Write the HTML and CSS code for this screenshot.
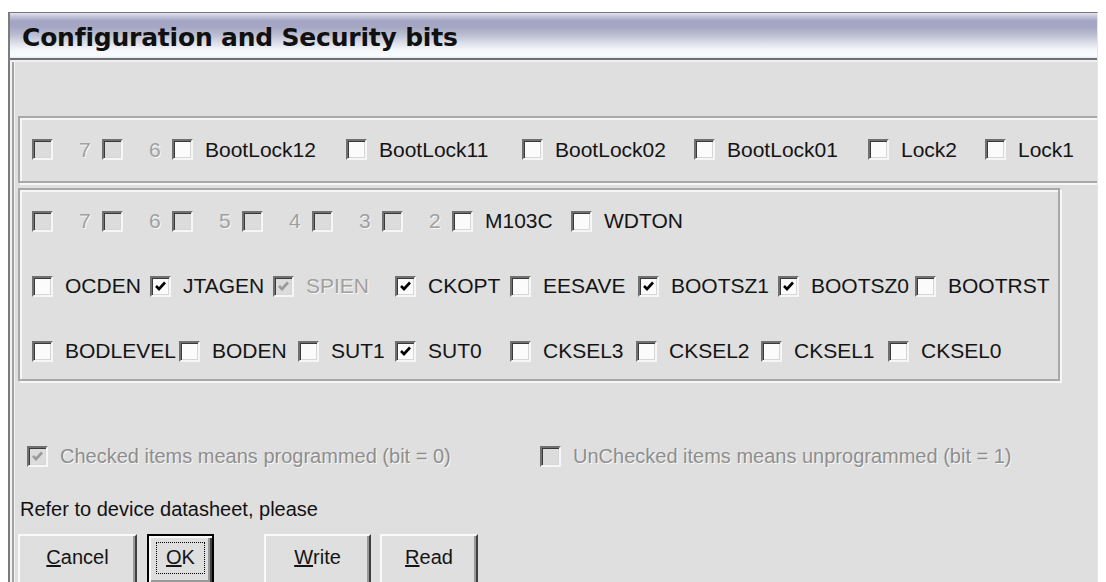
FILE: index.html
```html
<!DOCTYPE html>
<html lang="en">
<head>
<meta charset="utf-8">
<title>Configuration and Security bits</title>
<link rel="stylesheet" href="styles.css">
</head>
<body>
<div class="window">
  <div class="titlebar">
    <h1 class="title">Configuration and Security bits</h1>
  </div>

  <div class="client">
    <!-- lock byte -->
    <div class="group group-lock">
      <div class="row">
        <label class="bit w70"><span class="box dis"></span><span class="txt digit dis-txt">7</span></label>
        <label class="bit w70"><span class="box dis"></span><span class="txt digit dis-txt">6</span></label>
        <label class="bit w174"><span class="box"></span><span class="txt">BootLock12</span></label>
        <label class="bit w176"><span class="box"></span><span class="txt">BootLock11</span></label>
        <label class="bit w172"><span class="box"></span><span class="txt">BootLock02</span></label>
        <label class="bit w174"><span class="box"></span><span class="txt">BootLock01</span></label>
        <label class="bit w117"><span class="box"></span><span class="txt">Lock2</span></label>
        <label class="bit"><span class="box"></span><span class="txt">Lock1</span></label>
      </div>
    </div>

    <!-- fuse bytes -->
    <div class="group group-fuse">
      <div class="row">
        <label class="bit w70"><span class="box dis"></span><span class="txt digit dis-txt">7</span></label>
        <label class="bit w70"><span class="box dis"></span><span class="txt digit dis-txt">6</span></label>
        <label class="bit w70"><span class="box dis"></span><span class="txt digit dis-txt">5</span></label>
        <label class="bit w70"><span class="box dis"></span><span class="txt digit dis-txt">4</span></label>
        <label class="bit w70"><span class="box dis"></span><span class="txt digit dis-txt">3</span></label>
        <label class="bit w70"><span class="box dis"></span><span class="txt digit dis-txt">2</span></label>
        <label class="bit w119"><span class="box"></span><span class="txt">M103C</span></label>
        <label class="bit"><span class="box"></span><span class="txt">WDTON</span></label>
      </div>
      <div class="row">
        <label class="bit w118"><span class="box"></span><span class="txt">OCDEN</span></label>
        <label class="bit w123"><span class="box"><svg class="tick" viewBox="0 0 17 17"><path d="M4 8l3 3 6-6.5"/></svg></span><span class="txt">JTAGEN</span></label>
        <label class="bit w122"><span class="box dis"><svg class="tick tick-dis" viewBox="0 0 17 17"><path d="M4 8l3 3 6-6.5"/></svg></span><span class="txt dis-txt">SPIEN</span></label>
        <label class="bit w115"><span class="box"><svg class="tick" viewBox="0 0 17 17"><path d="M4 8l3 3 6-6.5"/></svg></span><span class="txt">CKOPT</span></label>
        <label class="bit w128"><span class="box"></span><span class="txt">EESAVE</span></label>
        <label class="bit w140"><span class="box"><svg class="tick" viewBox="0 0 17 17"><path d="M4 8l3 3 6-6.5"/></svg></span><span class="txt">BOOTSZ1</span></label>
        <label class="bit w137"><span class="box"><svg class="tick" viewBox="0 0 17 17"><path d="M4 8l3 3 6-6.5"/></svg></span><span class="txt">BOOTSZ0</span></label>
        <label class="bit"><span class="box"></span><span class="txt">BOOTRST</span></label>
      </div>
      <div class="row">
        <label class="bit w147"><span class="box"></span><span class="txt">BODLEVEL</span></label>
        <label class="bit w119"><span class="box"></span><span class="txt">BODEN</span></label>
        <label class="bit w97"><span class="box"></span><span class="txt">SUT1</span></label>
        <label class="bit w115"><span class="box"><svg class="tick" viewBox="0 0 17 17"><path d="M4 8l3 3 6-6.5"/></svg></span><span class="txt">SUT0</span></label>
        <label class="bit w126"><span class="box"></span><span class="txt">CKSEL3</span></label>
        <label class="bit w125"><span class="box"></span><span class="txt">CKSEL2</span></label>
        <label class="bit w127"><span class="box"></span><span class="txt">CKSEL1</span></label>
        <label class="bit"><span class="box"></span><span class="txt">CKSEL0</span></label>
      </div>
    </div>

    <!-- legend -->
    <div class="row legend">
      <label class="bit w513"><span class="box dis"><svg class="tick tick-dis" viewBox="0 0 17 17"><path d="M4 8l3 3 6-6.5"/></svg></span><span class="txt note-txt">Checked items means programmed (bit = 0)</span></label>
      <label class="bit"><span class="box dis"></span><span class="txt note-txt">UnChecked items means unprogrammed (bit = 1)</span></label>
    </div>

    <p class="hint">Refer to device datasheet, please</p>

    <div class="buttons">
      <button class="btn btn-cancel" type="button"><u>C</u>ancel</button>
      <button class="btn btn-ok" type="button"><span class="focus"><u>O</u>K</span></button>
      <button class="btn btn-write" type="button"><u>W</u>rite</button>
      <button class="btn btn-read" type="button"><u>R</u>ead</button>
    </div>
  </div>
</div>
</body>
</html>
```

FILE: styles.css
```css
html, body {
  margin: 0;
  padding: 0;
}

body {
  width: 1106px;
  height: 582px;
  overflow: hidden;
  background: #ffffff;
  font-family: "Liberation Sans", Arial, sans-serif;
  color: #141414;
}

/* dialog frame */
.window {
  box-sizing: border-box;
  margin: 12px 0 0 8px;
  width: 1090px;
  height: 570px;
  border-top: 1px solid #74767c;
  border-left: 2px solid #7c7c7c;
  border-right: 1px solid #e6e6e6;
  display: flex;
  flex-direction: column;
  overflow: hidden;
}

.titlebar {
  height: 47px;
  flex: none;
  display: flex;
  align-items: center;
  padding: 3px 0 0 12px;
  box-sizing: border-box;
  border-bottom: 2px solid #6e7278;
  background: linear-gradient(to bottom,
    #e4e4ee 0,
    #c8c8dc 3px,
    #a4a4c4 8px,
    #a6a6c4 14px,
    #bcbed2 22px,
    #dcdfe8 30px,
    #f4f8fc 37px,
    #f8fcff 43px,
    #d0d4d8 47px);
}

.title {
  margin: 0;
  font-family: "DejaVu Sans", sans-serif;
  font-weight: bold;
  font-size: 25px;
  letter-spacing: -0.2px;
  color: #101010;
}

.client {
  flex: 1;
  display: flex;
  flex-direction: column;
  align-items: flex-start;
  background: #dfdfdf;
  box-shadow:
    inset 0 2px 0 #f0f0f0,
    inset 2px 0 0 #f2f2f2,
    inset 4px 0 0 #a2a2a2,
    inset 5px 0 0 #f4f4f4;
  overflow: hidden;
}

/* etched group frames */
.group {
  box-sizing: border-box;
  flex: none;
  border: 2px solid #a8a8a8;
  box-shadow: inset 2px 2px 0 #f6f6f6, 2px 2px 0 #f6f6f6;
}

.group-lock {
  margin: 56px 0 0 8px;
  width: 1084px;
  height: 67px;
  display: flex;
  align-items: center;
}

.group-fuse {
  margin: 5px 0 0 8px;
  width: 1042px;
  height: 193px;
  display: flex;
  flex-direction: column;
  gap: 41px;
  padding-top: 19px;
}

.row {
  display: flex;
  align-items: center;
  height: 24px;
  padding-left: 12px;
}

.bit {
  display: flex;
  align-items: center;
  flex: none;
}

.w70 { width: 70px; }
.w97 { width: 97px; }
.w115 { width: 115px; }
.w117 { width: 117px; }
.w118 { width: 118px; }
.w119 { width: 119px; }
.w122 { width: 122px; }
.w123 { width: 123px; }
.w125 { width: 125px; }
.w126 { width: 126px; }
.w127 { width: 127px; }
.w128 { width: 128px; }
.w137 { width: 137px; }
.w140 { width: 140px; }
.w147 { width: 147px; }
.w172 { width: 172px; }
.w174 { width: 174px; }
.w176 { width: 176px; }
.w513 { width: 513px; }

/* sunken 3D check box */
.box {
  box-sizing: border-box;
  width: 21px;
  height: 21px;
  flex: none;
  display: flex;
  align-items: center;
  justify-content: center;
  border: 2px solid;
  border-color: #707070 #f6f6f6 #f6f6f6 #707070;
  background: #fbfbfb;
  box-shadow: inset 1px 1px 0 #3a3a3a, inset -1px -1px 0 #d6d6d6;
}

.box.dis {
  background: #dcdcdc;
}

.tick {
  width: 17px;
  height: 17px;
  fill: none;
  stroke: #000;
  stroke-width: 2.6;
}

.tick-dis {
  stroke: #9a9a9a;
}

.txt {
  margin-left: 12px;
  font-size: 21px;
  line-height: 24px;
  white-space: nowrap;
}

.digit {
  margin-left: 26px;
}

.dis-txt {
  color: #a0a0a0;
  text-shadow: 1px 1px 0 #f8f8f8;
}

.legend {
  margin-top: 63px;
  padding-left: 17px;
}

.note-txt {
  font-size: 20px;
  color: #8e8e8e;
  text-shadow: 1px 1px 0 #f8f8f8;
}

.hint {
  margin: 30px 0 0 10px;
  font-size: 20px;
  line-height: 22px;
  color: #121212;
}

/* push buttons */
.buttons {
  display: flex;
  margin: 14px 0 0 8px;
}

.btn {
  box-sizing: border-box;
  height: 52px;
  padding: 8px 0 0;
  align-self: flex-start;
  display: flex;
  justify-content: center;
  align-items: flex-start;
  font-family: "Liberation Sans", Arial, sans-serif;
  font-size: 20px;
  line-height: 26px;
  color: #141414;
  background: #dfdfdf;
  border: 2px solid;
  border-color: #fafafa #404040 #404040 #fafafa;
  box-shadow: inset -2px -2px 0 #9a9a9a;
}

.btn-cancel { width: 119px; }
.btn-ok {
  width: 67px;
  margin-left: 10px;
  border-color: #000;
  box-shadow: inset 2px 2px 0 #fafafa, inset -2px -2px 0 #404040, inset -4px -4px 0 #9a9a9a;
  padding-top: 6px;
}
.btn-write { width: 107px; margin-left: 50px; }
.btn-read { width: 98px; margin-left: 9px; }

.focus {
  border: 1px dotted #000;
  padding: 1px 9px 3px;
  line-height: 26px;
}
```
